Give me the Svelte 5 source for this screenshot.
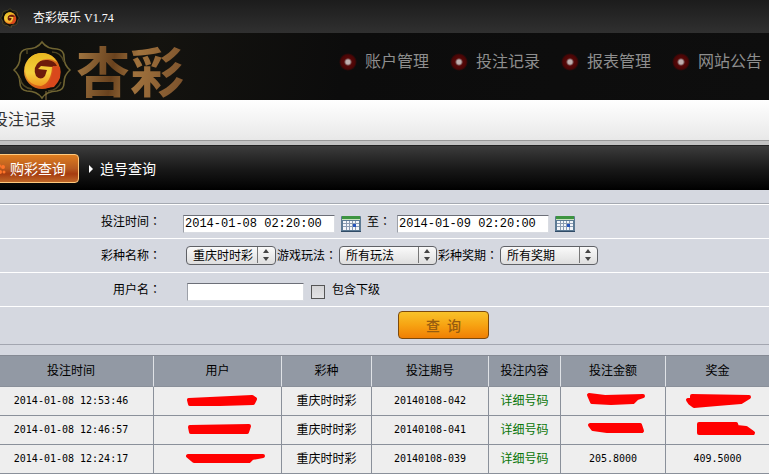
<script>
  const nav = ['账户管理', '投注记录', '报表管理', '网站公告'];
  const heads = ['投注时间', '用户', '彩种', '投注期号', '投注内容', '投注金额', '奖金'];

  const rows = [
    {
      time: '2014-01-08 12:53:46', issue: '20140108-042',
      user: 'M19 8 L82 5 L85 7 L83 11 L50 12 L20 12 Z',
      amount: 'M24 3 L40 5 L78 4 L72 6 L68 10 L46 11 L27 10 Z',
      prize: 'M22 4 L79 5 L71 10 L47 12 L24 14 L20 11 L18 8 L22 8 Z'
    },
    {
      time: '2014-01-08 12:46:57', issue: '20140108-041',
      user: 'M20 6 L79 5 L77 11 L21 11 Z',
      amount: 'M25 4 L75 4 L77 10 L42 10 L28 8 Z',
      prize: 'M29 3 L66 3 L67 6 L76 7 L83 12 L29 12 L29 8 Z'
    },
    {
      time: '2014-01-08 12:24:17', issue: '20140108-039',
      user: 'M18 6 L93 6 L82 8 L79 11 L24 11 Z',
      amountText: '205.8000', prizeText: '409.5000'
    }
  ];

  let from = $state('2014-01-08 02:20:00');
  let to = $state('2014-01-09 02:20:00');
  let username = $state('');
</script>

{#snippet emblem(size)}
  <svg width={size} height={size} viewBox="0 0 60 60" aria-hidden="true">
    <defs>
      <linearGradient id="ball{size}" x1="0" y1="0" x2="1" y2="1">
        <stop offset="0" stop-color="#ffe14d" />
        <stop offset="0.5" stop-color="#d9701c" />
        <stop offset="1" stop-color="#d63a12" />
      </linearGradient>
      <linearGradient id="swirl{size}" x1="0" y1="0" x2="0" y2="1">
        <stop offset="0" stop-color="#e8b820" />
        <stop offset="0.6" stop-color="#f4cf3c" />
        <stop offset="1" stop-color="#f09a20" />
      </linearGradient>
    </defs>
    <path d="M30 2 Q35 9 45 9 Q52 10 52 17 Q52 25 58 30 Q52 35 52 43 Q52 50 45 51 Q35 51 30 58 Q25 51 15 51 Q8 50 8 43 Q8 35 2 30 Q8 25 8 17 Q8 10 15 9 Q25 9 30 2Z" fill="#0e0e0a" stroke="#6f6432" stroke-width="1.6" />
    <path d="M15 9 L15 14 M8 38 Q10 48 20 49 M52 22 Q49 12 40 12 M49 42 Q46 50 36 51" fill="none" stroke="#4d4524" stroke-width="1.5" />
    <circle cx="30" cy="31" r="18" fill="url(#ball{size})" />
    <path d="M22 28 Q25 19 36 20 Q43 21 45 26 L38 27 L37 39 Q31 45 24 41 Q19 36 22 28Z" fill="#6d1a0a" />
    <path d="M13 28 Q16 13 31 13 Q41 14 45 22 Q36 16 28 21 Q20 27 24 36 Q29 41 33 36 L35 30 L26 29 L29 26 L40 27 Q39 43 29 46 Q13 45 13 28Z" fill="url(#swirl{size})" />
    <path d="M41 26 L48 27 Q51 38 42 47 L34 48 Q41 39 41 26Z" fill="#d9481c" />
    <path d="M34 51V60" stroke="#8c7240" stroke-width="1" />
  </svg>
{/snippet}

{#snippet calendar()}
  <svg width="20" height="18" viewBox="0 0 20 18" aria-hidden="true">
    <rect x="0" y="1" width="20" height="16" rx="1" fill="#5c7a94" />
    <rect x="1" y="1" width="18" height="3" fill="#3d9440" />
    <rect x="1" y="4" width="18" height="1" fill="#c7e2bd" />
    <rect x="2" y="6" width="16" height="9" fill="#f3f6fa" />
    <path d="M5.5 6V15M8.5 6V15M11.5 6V15M14.5 6V15M2 8.5H18M2 11.5H18" stroke="#8c9db3" />
    <rect x="12" y="9" width="3" height="3" fill="#2454bd" />
    <path d="M0 16.5H20" stroke="#304b66" />
  </svg>
{/snippet}

{#snippet picker(id, text, wide)}
  <span class="picker" class:wide>
    <select {id}><option>{text}</option></select>
    <svg class="arrows" width="18" height="16" viewBox="0 0 18 16" aria-hidden="true">
      <path d="M0.5 0V16" stroke="#777" />
      <path d="M9 2L12 6H6ZM9 14L12 10H6Z" fill="#444" />
    </svg>
  </span>
{/snippet}

{#snippet scribble(d)}
  <svg class="scribble" width="96" height="18" viewBox="0 0 96 18" aria-hidden="true">
    <path {d} fill="#f00" stroke="#f00" stroke-width="4" stroke-linejoin="round" />
  </svg>
{/snippet}

<div class="page">
  <div class="titlebar">{@render emblem(20)}<span>杏彩娱乐 V1.74</span></div>

  <header>
    <div class="brand">{@render emblem(60)}<strong>杏彩</strong></div>
    <nav>
      {#each nav as item}
        <a href="#top"><i></i>{item}</a>
      {/each}
    </nav>
  </header>

  <h1>投注记录</h1>

  <div class="tabs">
    <a class="tab active" href="#buy">
      <svg width="8" height="12" viewBox="0 0 8 12" aria-hidden="true"><circle cx="1" cy="3" r="2" fill="#ff7429" /><circle cx="5" cy="4" r="2" fill="#ff7429" /><circle cx="2" cy="9" r="2" fill="#ff7429" /><circle cx="6" cy="9" r="1.5" fill="#ff7429" /></svg>
      购彩查询
    </a>
    <a class="tab" href="#chase">
      <svg width="4" height="8" viewBox="0 0 4 8" aria-hidden="true"><path d="M0 0L4 4L0 8Z" fill="#fff" /></svg>
      追号查询
    </a>
  </div>

  <form onsubmit={(e) => e.preventDefault()}>
    <div class="row">
      <label class="name" for="from">投注时间<b>：</b></label>
      <div class="fields dates">
        <input id="from" class="date" type="text" bind:value={from} />
        {@render calendar()}
        <label for="to">至<b>：</b></label>
        <input id="to" class="date" type="text" bind:value={to} />
        {@render calendar()}
      </div>
    </div>
    <div class="row">
      <label class="name" for="game">彩种名称<b>：</b></label>
      <div class="fields choices">
        {@render picker('game', '重庆时时彩', false)}
        <label for="play">游戏玩法<b>：</b></label>
        {@render picker('play', '所有玩法', true)}
        <label for="issue">彩种奖期<b>：</b></label>
        {@render picker('issue', '所有奖期', true)}
      </div>
    </div>
    <div class="row">
      <label class="name" for="user">用户名<b>：</b></label>
      <div class="fields who">
        <input id="user" class="user" type="text" bind:value={username} />
        <input id="sub" type="checkbox" />
        <label for="sub">包含下级</label>
      </div>
    </div>
    <div class="submit"><button type="submit">查&ensp;询</button></div>
  </form>

  <table>
    <colgroup>
      <col class="c-time" /><col class="c-user" /><col class="c-game" /><col class="c-issue" /><col class="c-more" /><col class="c-amount" /><col />
    </colgroup>
    <thead>
      <tr>{#each heads as h}<th>{h}</th>{/each}</tr>
    </thead>
    <tbody>
      {#each rows as r}
        <tr>
          <td class="num">{r.time}</td>
          <td>{@render scribble(r.user)}</td>
          <td>重庆时时彩</td>
          <td class="num">{r.issue}</td>
          <td><a href="#detail">详细号码</a></td>
          <td class="num">{#if r.amount}{@render scribble(r.amount)}{:else}{r.amountText}{/if}</td>
          <td class="num">{#if r.prize}{@render scribble(r.prize)}{:else}{r.prizeText}{/if}</td>
        </tr>
      {/each}
    </tbody>
  </table>
</div>

<style>
  :global(body) {
    margin: 0;
    background: #d5d8e0;
  }
  .page {
    overflow: hidden;
    font: 12px/16px "Liberation Sans", "Noto Sans CJK SC", sans-serif;
    color: #000;
  }
  a {
    text-decoration: none;
  }
  svg {
    flex: none;
    display: block;
  }
  .titlebar {
    display: flex;
    align-items: center;
    gap: 13px;
    height: 33px;
    padding-top: 2px;
    box-sizing: border-box;
    background: linear-gradient(#1c1c1c, #303030);
    color: #fff;
    font-family: "Liberation Serif", "Noto Sans CJK SC", serif;
  }
  header {
    display: flex;
    justify-content: space-between;
    height: 67px;
    background: linear-gradient(100deg, #0d0e0c, #14130f 20%, #0c0c0c 45%, #0e0e0e);
  }
  .brand {
    display: flex;
    align-items: center;
    gap: 4px;
    padding: 6px 0 0 12px;
  }
  .brand strong {
    font: 700 54px/60px "Noto Sans CJK SC", sans-serif;
    background: linear-gradient(100deg, #a57a44, #69421e 35%, #a0723d 55%, #79502b);
    background-clip: text;
    -webkit-background-clip: text;
    color: transparent;
  }
  nav {
    display: flex;
    gap: 21px;
    padding: 18px 7px 0 0;
  }
  nav a {
    display: flex;
    gap: 8px;
    align-items: center;
    height: 22px;
    font-size: 16px;
    color: #8e8e8e;
    white-space: nowrap;
  }
  nav i {
    width: 18px;
    height: 18px;
    border-radius: 50%;
    background: radial-gradient(circle, #c0b0b0 0 2px, #806060 3px, #550808 4px, #4a0505 7px, transparent 9px);
  }
  h1 {
    margin: 0 0 0 -8px;
    height: 40px;
    font-size: 16px;
    line-height: 40px;
    font-weight: 400;
    color: #333;
    background: linear-gradient(#fff, #e8e8e8);
    border-bottom: 1px solid #999;
  }
  .tabs {
    display: flex;
    align-items: center;
    height: 44px;
    background: linear-gradient(#3c3c3c, #1a1a1a 50%, #000);
    border-top: 1px solid #222;
    box-shadow: 0 -4px #c2c2c2;
    margin-top: 4px;
    font-size: 14px;
  }
  .tab {
    display: flex;
    align-items: center;
    gap: 7px;
    padding: 1px 10px 0;
    color: #fff;
  }
  .tab.active {
    gap: 4px;
    height: 26px;
    margin-left: -3px;
    padding: 1px 12px 0 0;
    border: 1px solid #ffc97e;
    border-radius: 0 4px 4px 0;
    background: linear-gradient(#de7d20, #b75a20 50%, #a63c10 70%, #c06728);
  }
  form {
    margin-top: 13px;
    border-top: 1px solid #a5a9b1;
    border-bottom: 1px solid #a3a6b0;
  }
  .row {
    display: flex;
    align-items: center;
    height: 33px;
    border-top: 1px solid #fff;
  }
  .name {
    width: 161px;
    text-align: right;
  }
  label {
    white-space: nowrap;
  }
  b {
    font-family: "Noto Sans CJK TC", sans-serif;
    font-weight: 400;
  }
  .fields {
    display: flex;
    align-items: center;
  }
  .dates {
    gap: 6px;
    padding: 4px 0 0 22px;
  }
  .dates label {
    width: 24px;
    padding-bottom: 4px;
  }
  .choices {
    gap: 1px;
    padding-left: 25px;
  }
  .choices label {
    width: 61px;
  }
  .who {
    gap: 7px;
    padding: 5px 0 0 26px;
  }
  .who label {
    padding-bottom: 5px;
  }
  input {
    margin: 0;
    box-sizing: border-box;
    border: 1px solid #d9dce2;
    border-top-color: #6c6f78;
    border-left-color: #9ca0a8;
    background: #fff;
    color: #000;
  }
  .date {
    width: 152px;
    height: 18px;
    padding: 0 1px;
    font: 12px/16px "Liberation Mono", monospace;
  }
  .user {
    width: 117px;
    height: 18px;
    padding: 0 2px;
  }
  input[type='checkbox'] {
    appearance: none;
    width: 14px;
    height: 14px;
    border: 1px solid #555;
    background: linear-gradient(#d4d4d6, #e2e2e4);
  }
  .picker {
    position: relative;
    width: 90px;
  }
  .picker.wide {
    width: 98px;
  }
  select {
    appearance: none;
    display: block;
    width: 100%;
    height: 19px;
    padding: 0 0 0 6px;
    border: 1px solid #5f6166;
    border-radius: 4px;
    background: linear-gradient(#fafafa, #ececec 50%, #dedede);
    color: #000;
    font: inherit;
  }
  .arrows {
    position: absolute;
    right: 1px;
    top: 1px;
    pointer-events: none;
  }
  .submit {
    display: flex;
    justify-content: center;
    padding: 4px 0 5px 118px;
    border-top: 1px solid #fff;
  }
  button {
    width: 91px;
    height: 28px;
    padding: 0;
    border: 1px solid #7d4a0c;
    border-radius: 4px;
    background: linear-gradient(#f8c32a, #f7a312 50%, #f07f04);
    color: #965c10;
    font: 500 14px/24px "Noto Sans CJK SC", sans-serif;
    white-space: pre;
  }
  table {
    width: 100%;
    margin-top: 10px;
    table-layout: fixed;
    border-spacing: 0;
    border-top: 1px solid #858a94;
  }
  .c-time { width: 154px; }
  .c-user { width: 128px; }
  .c-game { width: 90px; }
  .c-issue { width: 117px; }
  .c-more { width: 72px; }
  .c-amount { width: 105px; }
  th,
  td {
    height: 28px;
    padding: 0;
    text-align: center;
    border-right: 1px solid #8a909a;
    border-bottom: 1px solid #8a909a;
    background: #eee;
    white-space: nowrap;
  }
  th {
    font-weight: 400;
    background: #9299a4;
    border-right-color: #dfe2e6;
    height: 30px;
  }
  th:first-child,
  td:first-child {
    padding-right: 11px;
  }
  th:last-child,
  td:last-child {
    border-right: 0;
  }
  td a {
    color: #087508;
  }
  .num {
    font: 10px/16px "DejaVu Sans Mono", monospace;
  }
  .scribble {
    margin: 0 auto;
  }
</style>
